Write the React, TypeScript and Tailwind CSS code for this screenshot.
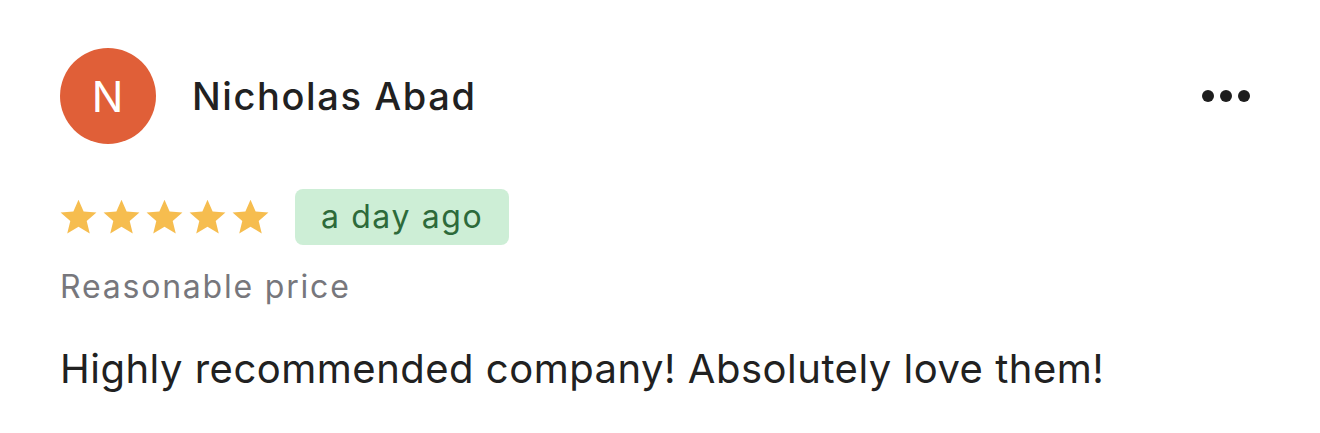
function Star() {
  return (
    <svg viewBox="0 0 24 24" className="w-[41px] h-[41px]" fill="#f6bd4f">
      <path d="M12 1.6l3 6.9 7.5.6-5.7 4.9 1.8 7.3L12 17.4l-6.6 3.9 1.8-7.3-5.7-4.9 7.5-.6z" />
    </svg>
  );
}

export default function App() {
  return (
    <div
      className="w-[1320px] h-[433px] bg-white text-[#212121] pl-[60px] pr-[70px] pt-[48px]"
      style={{ fontFamily: 'Inter, "Noto Sans", sans-serif' }}
    >
      <div className="flex items-center">
        <div className="w-[96px] h-[96px] rounded-full bg-[#e05f38] flex items-center justify-center text-white text-[42px] tracking-[1px]">
          N
        </div>
        <div className="ml-[36px] text-[38px] font-medium tracking-[1.6px]">Nicholas Abad</div>
        <div className="ml-auto flex gap-[6px]">
          <span className="w-[12px] h-[12px] rounded-full bg-[#1e1e1e]" />
          <span className="w-[12px] h-[12px] rounded-full bg-[#1e1e1e]" />
          <span className="w-[12px] h-[12px] rounded-full bg-[#1e1e1e]" />
        </div>
      </div>
      <div className="flex items-center mt-[45px]">
        <div className="flex gap-[2px] -ml-[2px]">
          <Star />
          <Star />
          <Star />
          <Star />
          <Star />
        </div>
        <div className="ml-[24px] h-[56px] px-[26px] rounded-[8px] bg-[#cdeed6] text-[#2d6a3a] text-[32px] tracking-[1.6px] flex items-center">
          a day ago
        </div>
      </div>
      <div className="mt-[22px] text-[32px] leading-[40px] tracking-[1.8px] text-[#77777c]">Reasonable price</div>
      <div className="mt-[38px] text-[40px] leading-[48px] tracking-[0.5px]">
        Highly recommended company! Absolutely love them!
      </div>
    </div>
  );
}
